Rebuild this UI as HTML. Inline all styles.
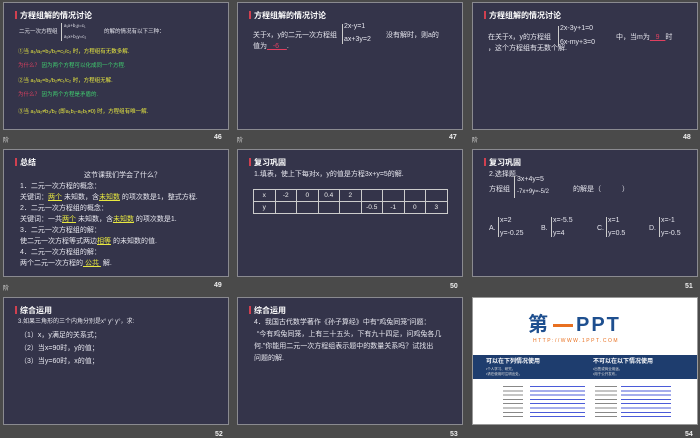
<!DOCTYPE html>
<html><head><meta charset="utf-8"><style>
*{margin:0;padding:0;box-sizing:border-box}
body{width:700px;height:438px;background:#4a4a4a;position:relative;overflow:hidden;font-family:"Liberation Sans","Noto Sans CJK SC",sans-serif;color:#e6e6ee}
.s{position:absolute;width:226px;height:128px;background:#34344a;border:1px solid #8a8a90;overflow:hidden}
.t{position:absolute;left:16px;top:7px;font-size:8px;font-weight:bold;color:#fff}
.t:before{content:"";position:absolute;left:-5px;top:1px;width:1.5px;height:8px;background:#d04050}
.a{position:absolute;font-size:7px;white-space:nowrap;line-height:1}
.n{position:absolute;font-size:7px;font-weight:bold;color:#eee}
.l{position:absolute;font-size:6px;color:#ddd}
.y{color:#e8e840}.g{color:#40d070}.r{color:#e04060}.u{text-decoration:underline}
.br{position:absolute;border-left:1px solid #ccc}
table{position:absolute;border-collapse:collapse;font-size:6.5px}
td{border:1px solid #ccc;width:21.5px;height:12px;text-align:center;color:#eee}
</style></head><body>

<!-- 46 -->
<div class="s" style="left:3px;top:2px">
<div class="t">方程组解的情况讨论</div>
<div class="a" style="left:15px;top:27px;font-size:5.5px">二元一次方程组</div>
<div class="br" style="left:57px;top:20px;height:18px"></div>
<div class="a" style="left:60px;top:21px;font-size:4.5px">a₁x+b₁y=c₁</div>
<div class="a" style="left:60px;top:32px;font-size:4.5px">a₂x+b₂y=c₂</div>
<div class="a" style="left:100px;top:27px;font-size:5.5px">的解的情况有以下三种：</div>
<div class="a y" style="left:14px;top:47px;font-size:5.5px">①当 a₁/a₂=b₁/b₂=c₁/c₂ 时，方程组有无数多解.</div>
<div class="a" style="left:14px;top:61px;font-size:5.5px"><span class="r">为什么？</span> <span class="g">因为两个方程可以化成同一个方程.</span></div>
<div class="a y" style="left:14px;top:76px;font-size:5.5px">②当 a₁/a₂=b₁/b₂≠c₁/c₂ 时，方程组无解.</div>
<div class="a" style="left:14px;top:90px;font-size:5.5px"><span class="r">为什么？</span> <span class="g">因为两个方程是矛盾的.</span></div>
<div class="a y" style="left:14px;top:107px;font-size:5.5px">③当 a₁/a₂≠b₁/b₂ (即a₁b₂-a₂b₁≠0) 时，方程组有唯一解.</div>
</div>
<div class="l" style="left:3px;top:135px">阶</div><div class="n" style="left:214px;top:134px">46</div>

<!-- 47 -->
<div class="s" style="left:237px;top:2px">
<div class="t">方程组解的情况讨论</div>
<div class="a" style="left:15px;top:29px">关于x，y的二元一次方程组</div>
<div class="br" style="left:104px;top:21px;height:20px"></div>
<div class="a" style="left:106px;top:20px">2x-y=1</div>
<div class="a" style="left:106px;top:33px">ax+3y=2</div>
<div class="a" style="left:148px;top:29px">没有解时，则a的</div>
<div class="a" style="left:15px;top:40px">值为<span class="u r">&nbsp;&nbsp;&nbsp;-6&nbsp;&nbsp;&nbsp;&nbsp;</span>.</div>
</div>
<div class="l" style="left:237px;top:135px">阶</div><div class="n" style="left:449px;top:134px">47</div>

<!-- 48 -->
<div class="s" style="left:472px;top:2px">
<div class="t">方程组解的情况讨论</div>
<div class="a" style="left:15px;top:31px">在关于x，y的方程组</div>
<div class="br" style="left:85px;top:23px;height:20px"></div>
<div class="a" style="left:87px;top:22px">2x-3y+1=0</div>
<div class="a" style="left:87px;top:36px">6x-my+3=0</div>
<div class="a" style="left:143px;top:31px">中，当m为<span class="u r">&nbsp;&nbsp;&nbsp;9&nbsp;&nbsp;&nbsp;</span>时</div>
<div class="a" style="left:15px;top:42px">，这个方程组有无数个解.</div>
</div>
<div class="l" style="left:472px;top:135px">阶</div><div class="n" style="left:683px;top:134px">48</div>

<!-- 49 -->
<div class="s" style="left:3px;top:149px">
<div class="t">总结</div>
<div class="a" style="left:80px;top:22px">这节课我们学会了什么？</div>
<div class="a" style="left:16px;top:33px">1．二元一次方程的概念：</div>
<div class="a" style="left:16px;top:44px">关键词：<span class="y u">两个</span> 未知数，含<span class="y u">未知数</span> 的项次数是1，整式方程.</div>
<div class="a" style="left:16px;top:55px">2．二元一次方程组的概念：</div>
<div class="a" style="left:16px;top:66px">关键词：一共<span class="y u">两个</span> 未知数，含<span class="y u">未知数</span> 的项次数是1.</div>
<div class="a" style="left:16px;top:77px">3．二元一次方程组的解：</div>
<div class="a" style="left:16px;top:88px">使二元一次方程等式两边<span class="y u">相等</span> 的未知数的值.</div>
<div class="a" style="left:16px;top:99px">4．二元一次方程组的解：</div>
<div class="a" style="left:16px;top:110px">两个二元一次方程的<span class="y u">&nbsp;公共&nbsp;</span> 解.</div>
</div>
<div class="l" style="left:3px;top:283px">阶</div><div class="n" style="left:214px;top:282px">49</div>

<!-- 50 -->
<div class="s" style="left:237px;top:149px">
<div class="t">复习巩固</div>
<div class="a" style="left:16px;top:21px">1.填表，使上下每对x，y的值是方程3x+y=5的解.</div>
<table style="left:15px;top:39px"><tr><td>x</td><td>-2</td><td>0</td><td>0.4</td><td>2</td><td></td><td></td><td></td><td></td></tr><tr><td>y</td><td></td><td></td><td></td><td></td><td>-0.5</td><td>-1</td><td>0</td><td>3</td></tr></table>
</div>
<div class="n" style="left:450px;top:283px">50</div>

<!-- 51 -->
<div class="s" style="left:472px;top:149px">
<div class="t">复习巩固</div>
<div class="a" style="left:16px;top:21px">2.选择题.</div>
<div class="a" style="left:16px;top:36px">方程组</div>
<div class="br" style="left:41px;top:26px;height:22px"></div>
<div class="a" style="left:44px;top:26px">3x+4y=5</div>
<div class="a" style="left:44px;top:39px;font-size:6px">-7x+9y=-5/2</div>
<div class="a" style="left:100px;top:36px">的解是（　　　）</div>
<div class="a" style="left:16px;top:75px">A.</div><div class="br" style="left:25px;top:67px;height:20px"></div><div class="a" style="left:27px;top:67px">x=2</div><div class="a" style="left:27px;top:80px">y=-0.25</div>
<div class="a" style="left:68px;top:75px">B.</div><div class="br" style="left:78px;top:67px;height:20px"></div><div class="a" style="left:80px;top:67px">x=-5.5</div><div class="a" style="left:80px;top:80px">y=4</div>
<div class="a" style="left:124px;top:75px">C.</div><div class="br" style="left:133px;top:67px;height:20px"></div><div class="a" style="left:135px;top:67px">x=1</div><div class="a" style="left:135px;top:80px">y=0.5</div>
<div class="a" style="left:176px;top:75px">D.</div><div class="br" style="left:186px;top:67px;height:20px"></div><div class="a" style="left:188px;top:67px">x=-1</div><div class="a" style="left:188px;top:80px">y=-0.5</div>
</div>
<div class="n" style="left:685px;top:283px">51</div>

<!-- 52 -->
<div class="s" style="left:3px;top:297px">
<div class="t">综合运用</div>
<div class="a" style="left:14px;top:21px;font-size:6px">3.如果三角形的三个内角分别是x° y° y°，求:</div>
<div class="a" style="left:16px;top:34px">（1）x，y满足的关系式；</div>
<div class="a" style="left:16px;top:47px">（2）当x=90时，y的值；</div>
<div class="a" style="left:16px;top:60px">（3）当y=60时，x的值；</div>
</div>
<div class="n" style="left:215px;top:431px">52</div>

<!-- 53 -->
<div class="s" style="left:237px;top:297px">
<div class="t">综合运用</div>
<div class="a" style="left:16px;top:21px">4．我国古代数学著作《孙子算经》中有“鸡兔同笼”问题：</div>
<div class="a" style="left:19px;top:33px">“今有鸡兔同笼，上有三十五头，下有九十四足，问鸡兔各几</div>
<div class="a" style="left:16px;top:45px">何.”你能用二元一次方程组表示题中的数量关系吗？试找出</div>
<div class="a" style="left:16px;top:57px">问题的解.</div>
</div>
<div class="n" style="left:450px;top:431px">53</div>

<!-- 54 -->
<div class="s" style="left:472px;top:297px;background:#fff;border-color:#999">
<div class="a" style="left:55px;top:17px;font-size:20px;font-weight:bold;color:#1e4f8f;letter-spacing:2px">第<span style="display:inline-block;width:20px;height:3px;background:#e87020;vertical-align:middle;margin:0 3px"></span>PPT</div>
<div class="a" style="left:60px;top:41px;font-size:5px;color:#e87020;letter-spacing:1.5px">HTTP://WWW.1PPT.COM</div>
<div style="position:absolute;left:0;top:57px;width:226px;height:24px;background:#1e3d6e"></div>
<div class="a" style="left:13px;top:61px;font-size:6px;font-weight:bold;color:#fff">可以在下列情况使用</div>
<div class="a" style="left:13px;top:70px;font-size:3.5px;color:#ddd">•个人学习、研究。</div>
<div class="a" style="left:13px;top:75px;font-size:3.5px;color:#ddd">•请在使用时注明出处。</div>
<div class="a" style="left:120px;top:61px;font-size:6px;font-weight:bold;color:#fff">不可以在以下情况使用</div>
<div class="a" style="left:120px;top:70px;font-size:3.5px;color:#ddd">•出售或商业用途。</div>
<div class="a" style="left:120px;top:75px;font-size:3.5px;color:#ddd">•用于公开发布。</div>
<div style="position:absolute;left:30px;top:86px;width:20px;height:36px;background:repeating-linear-gradient(#fff 0 2px,#888 2px 3px,#fff 3px 4.3px)"></div>
<div style="position:absolute;left:57px;top:86px;width:55px;height:36px;background:repeating-linear-gradient(#fff 0 2px,#4b5bd8 2px 3px,#fff 3px 4.3px)"></div>
<div style="position:absolute;left:122px;top:86px;width:22px;height:36px;background:repeating-linear-gradient(#fff 0 2px,#888 2px 3px,#fff 3px 4.3px)"></div>
<div style="position:absolute;left:148px;top:86px;width:50px;height:36px;background:repeating-linear-gradient(#fff 0 2px,#4b5bd8 2px 3px,#fff 3px 4.3px)"></div>
</div>
<div class="n" style="left:685px;top:431px">54</div>
</body></html>
